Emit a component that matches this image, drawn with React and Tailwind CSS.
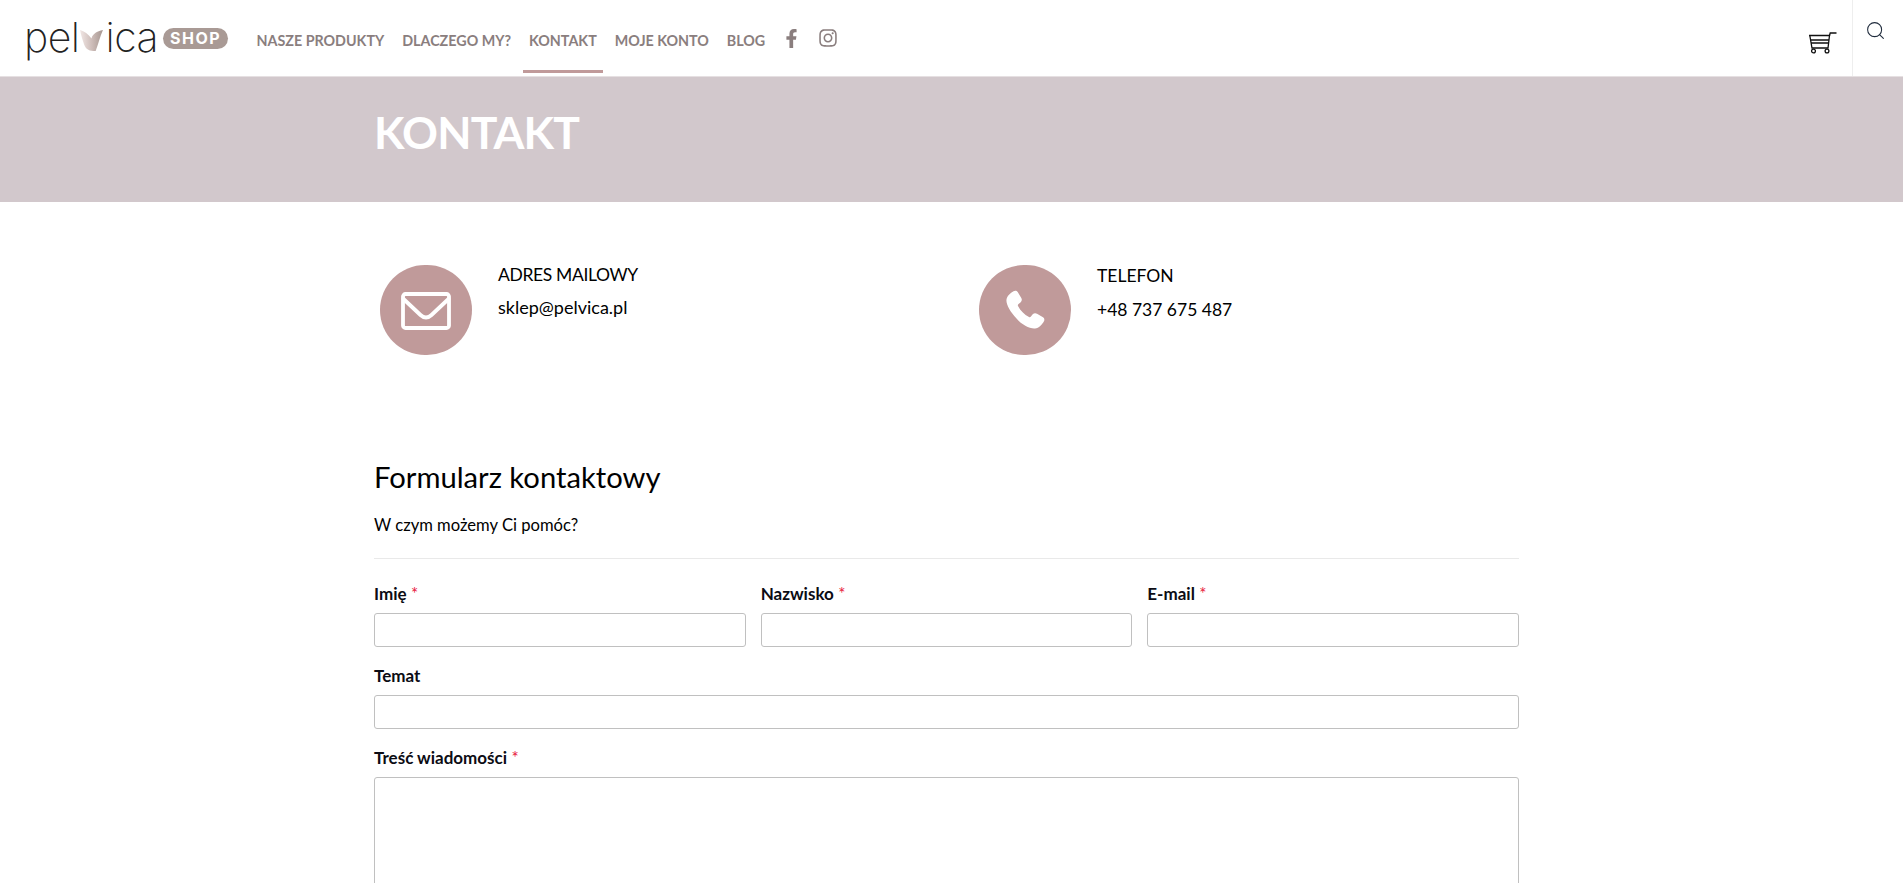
import React from "react";
import { FaFacebookF, FaInstagram } from "react-icons/fa";
import { Search } from "lucide-react";

const nav = ["NASZE PRODUKTY", "DLACZEGO MY?", "KONTAKT", "MOJE KONTO", "BLOG"];

function Logo() {
  return (
    <div className="flex items-center w-[226.500px] ml-[24px] -mt-[2px] shrink-0">
      <span className="font-['Inter',sans-serif] font-extralight text-[41px] leading-none text-[#222] tracking-[-0.5px]">pel</span>
      <svg viewBox="0 0 24 22" className="w-[25px] h-[23px] mt-[6px] -ml-[1px] shrink-0">
        <defs>
          <linearGradient id="lg" x1="0" y1="0" x2="1" y2="0">
            <stop offset="0" stopColor="#f1e6e4" />
            <stop offset="0.55" stopColor="#cbbab6" />
            <stop offset="1" stopColor="#a59690" />
          </linearGradient>
        </defs>
        <path d="M1 1C5 2 9 5 12 9C13 5 17 2 23 1C20 8 18 16 16 21C10 21 7 20 5 15C3.500 11 2 6 1 1Z" fill="url(#lg)" />
      </svg>
      <span className="font-['Inter',sans-serif] font-extralight text-[41px] leading-none text-[#222] tracking-[-0.5px] ml-[2px]">ica</span>
      <span className="ml-[5px] mt-[3px] h-[21px] w-[65px] shrink-0 rounded-full bg-[#a99a95] text-white font-['Inter',sans-serif] font-bold text-[16px] tracking-[1.5px] leading-[21px] text-center">SHOP</span>
    </div>
  );
}

function Cart() {
  return (
    <svg viewBox="0 0 28 22" className="w-[28px] h-[22px]" fill="none" stroke="#111" strokeWidth="1.300">
      <path d="M0 3.500H20.500L19 16H3L0.800 3.500" />
      <path d="M1.500 8H20M2 11H19.500" strokeWidth="1.500" />
      <path d="M20.500 3.500L21.200 1H27.500" />
      <circle cx="4.500" cy="19" r="1.900" />
      <circle cx="18" cy="19" r="1.900" />
    </svg>
  );
}

function Header() {
  return (
    <header className="h-[76px] flex items-stretch bg-white">
      <Logo />
      <nav className="flex items-start text-[14.300px] font-bold text-[#8a7e7e] gap-[6px]">
        {nav.map((n) => (
          <a key={n} className={`px-[6px] h-[73px] pt-[31px] leading-[20px] whitespace-nowrap ${n === "KONTAKT" ? "border-b-[3px] border-[#c09a9a]" : ""}`}>{n}</a>
        ))}
        <div className="flex items-center gap-[18px] ml-[6px] mt-[29px] h-[18px]">
          <FaFacebookF className="w-[17px] h-[19px]" />
          <FaInstagram className="w-[20px] h-[20px]" />
        </div>
      </nav>
      <div className="ml-auto flex items-stretch">
        <div className="pt-[32px] pr-[15px]"><Cart /></div>
        <div className="w-[51px] border-l border-[#eeeeee] pl-[12px] pt-[20px]">
          <Search className="w-[21px] h-[21px] text-[#1f2b3c]" strokeWidth={1.2} />
        </div>
      </div>
    </header>
  );
}

function Info({ icon, title, value, wide, titleClass, valueClass }) {
  return (
    <div className={`flex ${wide} shrink-0`}>
      <div className="w-[92px] h-[90px] rounded-full bg-[#c09a9a] flex items-center justify-center shrink-0 text-white">{icon}</div>
      <div className="ml-[26px] text-black text-[17.500px]">
        <div className={`leading-[22px] ${titleClass}`}>{title}</div>
        <div className={`leading-[22px] ${valueClass}`}>{value}</div>
      </div>
    </div>
  );
}

function Label({ children, req }) {
  return (
    <label className="block text-[17px] font-bold leading-[20px] text-[#0c0c14] mb-[9px]">
      {children}
      {req && <span className="text-[#e8173d] font-normal text-[17px]"> *</span>}
    </label>
  );
}

const inputCls = "block w-full h-[34px] border border-[#c0c0c0] rounded-[3px] bg-white";

export default function App() {
  return (
    <div className="h-[883px] overflow-hidden bg-white font-['Lato','Carlito',sans-serif]">
      <Header />
      <section className="h-[126px] bg-[#d2c8cc] border-t border-[#e6e0e2] flex items-center">
        <h1 className="ml-[374px] text-white text-[44.500px] font-bold leading-none tracking-[-0.8px] -mt-[14px]">KONTAKT</h1>
      </section>
      <main className="ml-[374px] w-[1145px]">
        <div className="flex pt-[63px]">
          <div className="pl-[6px] flex">
            <Info
              wide="w-[599px]"
              titleClass="-mt-[1px] tracking-[-0.35px]"
              valueClass="mt-[10px] text-[18px]"
              title="ADRES MAILOWY"
              value="sklep@pelvica.pl"
              icon={
                <svg viewBox="0 0 50 38" className="w-[50px] h-[38px] mt-[2px]" fill="none" stroke="white" strokeWidth="3.800" strokeLinejoin="round" strokeLinecap="round">
                  <rect x="2" y="2" width="46" height="34" rx="2.500" />
                  <path d="M2.500 7L19.500 23Q25 28 30.500 23L47.500 7" />
                </svg>
              }
            />
            <Info
              wide="w-[460px]"
              title="TELEFON"
              valueClass="mt-[12px]"
              value="+48 737 675 487"
              icon={
                <svg viewBox="0 0 40 40" className="w-[40px] h-[40px]" fill="white">
                  <path d="M8.500 1.200C10 0.200 11.800 0.600 12.700 2L16.300 8C17.200 9.500 16.900 11.200 15.700 12.300L13.300 14.300C12.800 14.800 12.700 15.400 13 16C15.500 20.800 19.200 24.500 24 27C24.600 27.300 25.200 27.200 25.700 26.700L27.700 24.300C28.800 23.100 30.500 22.800 32 23.700L38 27.300C39.400 28.200 39.800 30 38.800 31.500C37 34.600 34 38 30 38.500C25 39 17 35 11.500 28.500C5 21.500 0.800 14 1.500 9.500C2 5.800 5.400 3 8.500 1.200Z" />
                </svg>
              }
            />
          </div>
        </div>
        <h2 className="mt-[104px] text-[29.200px] leading-[36px] text-black">Formularz kontaktowy</h2>
        <p className="mt-[18px] text-[16.600px] leading-[24px] text-black">W czym możemy Ci pomóc?</p>
        <div className="mt-[21px] border-t border-[#e9e9e9]" />
        <div className="grid grid-cols-3 gap-x-[15px] mt-[25px]">
          <div><Label req>Imię</Label><input className={inputCls} /></div>
          <div><Label req>Nazwisko</Label><input className={inputCls} /></div>
          <div><Label req>E-mail</Label><input className={inputCls} /></div>
        </div>
        <div className="mt-[19px]"><Label>Temat</Label><input className={inputCls} /></div>
        <div className="mt-[19px]"><Label req>Treść wiadomości</Label><textarea className="block w-full h-[200px] border border-[#c0c0c0] rounded-[3px] bg-white resize-none" /></div>
      </main>
    </div>
  );
}
